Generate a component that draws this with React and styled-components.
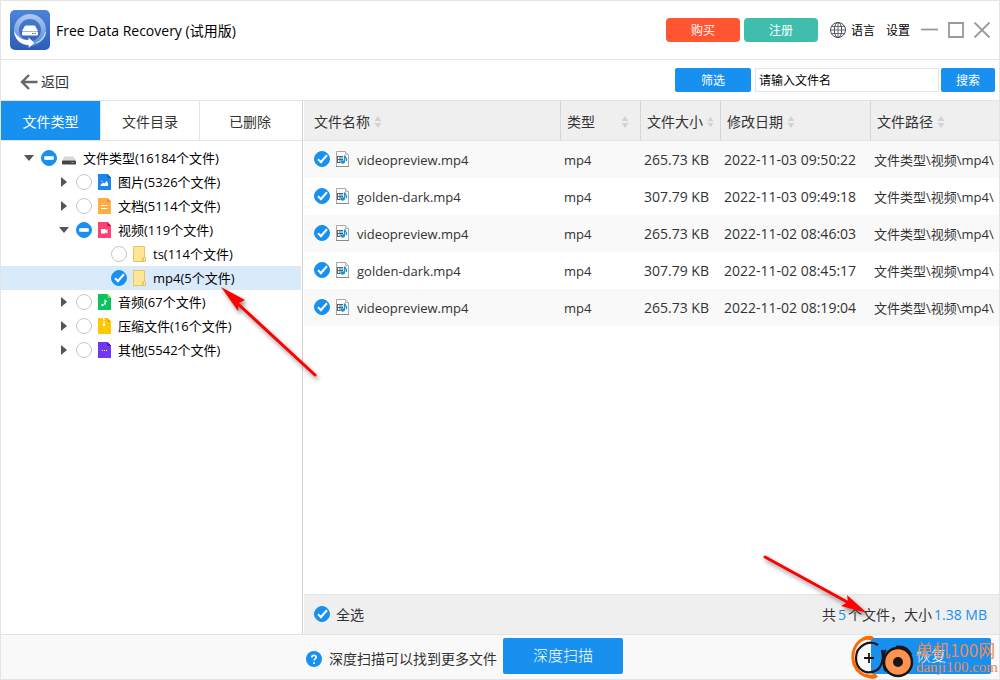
import React from "react";
import styled, { createGlobalStyle, css } from "styled-components";

const BLUE = "#1890f0";
const LINE = "#e4e4e4";

const GlobalStyle = createGlobalStyle`
  *, *::before, *::after { box-sizing: border-box; }
  body { margin: 0; background: #fff; }
  body, button, input {
    font-family: "Open Sans", "Noto Sans", "Noto Sans CJK SC", sans-serif;
  }
  button { cursor: pointer; }
`;

const Window = styled.div`
  position: relative;
  display: flex;
  flex-direction: column;
  min-height: 100vh;
  border: 1px solid ${LINE};
  color: #333;
  font-size: 14px;
  line-height: 20px;
  overflow: hidden;
`;

const TitleBar = styled.header`
  display: flex;
  align-items: center;
  height: 59px;
  padding: 0 8px 0 9px;
  border-bottom: 1px solid ${LINE};
`;

const AppTitle = styled.h1`
  flex: 1;
  margin: 0 0 0 6px;
  padding-top: 2px;
  font-size: 14px;
  font-weight: 400;
  color: #000;
`;

const Button = styled.button`
  display: block;
  width: ${(p) => p.$width}px;
  height: ${(p) => p.$height || 24}px;
  padding: ${(p) => (p.$height ? "0 0 2px" : "2px 0 0")};
  border: 0;
  border-radius: ${(p) => p.$radius || 2}px;
  background: ${(p) => p.$color || BLUE};
  color: #fff;
  font-size: ${(p) => p.$size || 12}px;
  font-weight: ${(p) => (p.$height ? 300 : 400)};
  line-height: 20px;
`;

const TitleButtons = styled.div`
  display: flex;
  gap: 4px;
  margin-right: 12px;
`;

const TextButton = styled.button`
  display: flex;
  align-items: center;
  gap: 5px;
  margin-right: 11px;
  padding: 0;
  border: 0;
  background: none;
  color: #000;
  font-size: 12px;
  line-height: 20px;
  span { padding-top: 2px; }
`;

const WindowControls = styled.div`
  display: flex;
  gap: 8px;
`;

const IconButton = styled.button`
  display: flex;
  padding: 0;
  border: 0;
  background: none;
`;

const Toolbar = styled.div`
  display: flex;
  align-items: center;
  height: 41px;
  padding: 0 4px 0 19px;
  border-bottom: 1px solid ${LINE};
`;

const BackButton = styled.button`
  display: flex;
  align-items: center;
  gap: 3px;
  margin: 3px auto 0 0;
  padding: 0;
  border: 0;
  background: none;
  color: #333;
  font-size: 14px;
  line-height: 20px;
`;

const SearchForm = styled.form`
  display: flex;
  gap: 2px;
  margin-left: 4px;
`;

const SearchInput = styled.input`
  width: 184px;
  height: 24px;
  padding: 0 3px;
  border: 1px solid ${LINE};
  color: #000;
  font-size: 12px;
  &::placeholder { color: #000; opacity: 1; }
`;

const Body = styled.div`
  display: flex;
  flex: 1;
`;

const Sidebar = styled.aside`
  flex: 0 0 302px;
  border-right: 1px solid #d4d4d4;
`;

const Tabs = styled.div`
  display: grid;
  grid-template-columns: 100px 99px 1fr;
  height: 40px;
  border-bottom: 1px solid ${LINE};
`;

const Tab = styled.button`
  padding: 2px 0 0;
  border: 0;
  border-right: 1px solid ${LINE};
  background: ${(p) => (p.$active ? BLUE : "#fff")};
  color: ${(p) => (p.$active ? "#fff" : "#333")};
  font-size: 14px;
  line-height: 20px;
  &:last-child { border-right: 0; padding-right: 2px; }
`;

const Tree = styled.ul`
  margin: 0;
  padding: 5px 1px 0 0;
  list-style: none;
`;

const TreeItem = styled.li`
  display: flex;
  align-items: center;
  height: 24px;
  padding-left: ${(p) => 23 + p.$level * 35}px;
  background: ${(p) => (p.$selected ? "#d9ebfb" : "transparent")};
`;

const Disclosure = styled.button`
  display: flex;
  align-items: center;
  justify-content: center;
  width: 10px;
  height: 16px;
  margin-right: 7px;
  padding: 0;
  border: 0;
  background: none;
  visibility: ${(p) => (p.$hidden ? "hidden" : "visible")};
`;

const TreeLabel = styled.label`
  display: flex;
  align-items: center;
  color: #000;
  font-size: 13px;
  line-height: 20px;
  white-space: nowrap;
  svg { margin: 0 7px 0 5px; }
`;

const filled = css`
  border-color: ${BLUE};
  background: ${BLUE};
`;

const Check = styled.input.attrs({ type: "checkbox" })`
  appearance: none;
  display: grid;
  flex: none;
  place-items: center;
  width: 16px;
  height: 16px;
  margin: 0;
  border: 1px solid #c6c6c6;
  border-radius: 50%;
  background: #fff;
  &::after { content: ""; display: none; }
  &:checked { ${filled} }
  &:checked::after {
    display: block;
    width: 5px;
    height: 10px;
    margin-bottom: 2px;
    border: solid #fff;
    border-width: 0 2px 2px 0;
    transform: rotate(42deg);
  }
  &:indeterminate { ${filled} }
  &:indeterminate::after {
    display: block;
    width: 10px;
    height: 4px;
    border: 1px solid #d9ecfd;
    border-radius: 1px;
    background: #fff;
  }
`;

const Main = styled.main`
  display: flex;
  flex: 1;
  flex-direction: column;
  min-width: 0;
  margin-left: 1px;
`;

const Table = styled.table`
  width: 100%;
  border-collapse: separate;
  border-spacing: 0;
  table-layout: fixed;
`;

const HeadCell = styled.th`
  height: 40px;
  padding: 2px 6px 0 6px;
  border-right: 1px solid #d6d6d6;
  border-bottom: 1px solid ${LINE};
  background: #efefef;
  font-weight: 400;
  text-align: left;
  white-space: nowrap;
  &:first-child { padding-left: 10px; }
  &:last-child { border-right: 0; }
`;

const HeadContent = styled.div`
  display: flex;
  align-items: center;
  justify-content: ${(p) => (p.$spread ? "space-between" : "flex-start")};
  gap: 4px;
  padding-right: ${(p) => (p.$spread ? 5 : 0)}px;
`;

const Row = styled.tr`
  &:nth-child(odd) { background: #f9f9f9; }
`;

const Cell = styled.td`
  height: 37px;
  padding: 1px 0 0 3px;
  overflow: hidden;
  white-space: nowrap;
  font-size: ${(p) => p.$size || 14}px;
  &:first-child { padding: 0 0 1px 10px; }
`;

const FileLabel = styled.label`
  display: flex;
  align-items: center;
  svg { margin: 0 8px 0 6px; }
  span { padding-top: 2px; }
`;

const Summary = styled.div`
  display: flex;
  align-items: center;
  justify-content: space-between;
  height: 40px;
  margin-top: auto;
  padding: 0 12px 0 10px;
  border-top: 1px solid ${LINE};
  background: #efefef;
`;

const SelectAll = styled.label`
  display: flex;
  align-items: center;
  gap: 6px;
  padding-bottom: 2px;
  span { padding-top: 2px; }
`;

const Highlight = styled.span`
  margin: 0 2px;
  color: ${BLUE};
  &:last-child { margin-right: 0; }
`;

const Footer = styled.footer`
  display: flex;
  align-items: center;
  height: 45px;
  padding: 0 8px 2px 305px;
  border-top: 1px solid ${LINE};
  background: #f9f9f9;
`;

const Hint = styled.p`
  display: flex;
  align-items: center;
  gap: 7px;
  margin: 6px 6px 0 0;
`;

const RestoreSlot = styled.div`
  margin-left: auto;
`;

const TreeArrow = styled.svg`
  position: absolute;
  top: 275px;
  left: 208px;
  pointer-events: none;
`;

const SummaryArrow = styled.svg`
  position: absolute;
  right: 119px;
  bottom: 53px;
  pointer-events: none;
`;

const Watermark = styled.div`
  position: absolute;
  right: 1px;
  bottom: 0;
  display: flex;
  align-items: center;
  gap: 2px;
  color: #f08a50;
  pointer-events: none;
`;

const WatermarkText = styled.div`
  font-size: 17px;
  line-height: 19px;
  white-space: nowrap;
  font-family: "Noto Sans CJK SC", sans-serif;
  small {
    display: block;
    font-family: "Liberation Serif", serif;
    font-size: 15px;
    line-height: 17px;
  }
`;

const AppLogo = () => (
  <svg width="40" height="40" viewBox="0 0 40 40" aria-hidden="true">
    <defs>
      <linearGradient id="logoBg" x1="0" y1="0" x2="0" y2="1">
        <stop offset="0" stopColor="#4d84d8" />
        <stop offset="1" stopColor="#2b5eb4" />
      </linearGradient>
      <linearGradient id="logoRing" x1="0" y1="0" x2="0" y2="1">
        <stop offset="0" stopColor="#a9c5f0" />
        <stop offset="1" stopColor="#5c8ddb" />
      </linearGradient>
    </defs>
    <rect width="40" height="40" rx="5" fill="url(#logoBg)" />
    <circle cx="20" cy="20" r="13.500" fill="none" stroke="url(#logoRing)" strokeWidth="5" />
    <path d="M4 21c1 9 7 14 15 14l-.5 3 6-5-6-5.500v2.500C12 30 7 27 4 21z" fill="#fff" />
    <path d="M26 33c5-2 9-6 9.500-11" fill="none" stroke="#c9dcf7" strokeWidth="1.200" />
    <path d="M16 15.500h8q1 0 1.500 1l2.500 4.500H12l2.500-4.500q.5-1 1.500-1z" fill="#fff" />
    <rect x="12" y="21.500" width="16" height="4" rx="1" fill="#fff" />
    <path d="M22 23.500h1.500M24.500 23.500H26" stroke="#4278cb" strokeWidth="1" />
  </svg>
);

const BackIcon = () => (
  <svg width="18" height="16" viewBox="0 0 18 16" fill="none" stroke="#666" strokeWidth="2.400" aria-hidden="true">
    <path d="M17.500 8H2M9 1 2 8l7 7" />
  </svg>
);

const GlobeIcon = () => (
  <svg width="16" height="16" viewBox="0 0 16 16" fill="none" stroke="#444a55" strokeWidth="1" aria-hidden="true">
    <circle cx="8" cy="8" r="7.500" />
    <ellipse cx="8" cy="8" rx="3.700" ry="7.500" />
    <path d="M8 .5v15M2 4.500h12M.5 8h15M2 11.500h12" strokeWidth=".8" />
  </svg>
);

const controlPaths = {
  最小化: "M0 7.500h17",
  最大化: "M2 1h14v14H2z",
  关闭: "M1.500 .5l15 15M16.500 .5l-15 15",
};

const ControlIcon = ({ name }) => (
  <svg width="18" height="16" viewBox="0 0 18 16" fill="none" stroke="#999" strokeWidth="1.800" aria-hidden="true">
    <path d={controlPaths[name]} />
  </svg>
);

const Caret = ({ open }) => (
  <svg width="10" height="12" viewBox="0 0 10 12" fill="#555" aria-hidden="true">
    <path d={open ? "M0 3h10L5 9z" : "M2 1v10l6-5z"} />
  </svg>
);

const SortIcon = () => (
  <svg width="8" height="12" viewBox="0 0 8 12" fill="#d3d3d3" aria-hidden="true">
    <path d="M4 0l3.500 5h-7zM4 12l3.500-5h-7z" />
  </svg>
);

const docs = {
  image: { color: "#1b87ee", fold: "#0a5cb8", mark: <path d="M3.500 12v-1l2.500-2.500 1.500 1L9.500 7l1.500 2v3zM4.500 6.500h1v1h-1z" fill="#fff" /> },
  doc: { color: "#ffae45", fold: "#f08a1d", mark: <path d="M4 7.500h6.500M4 10.500h6.500" stroke="#fff" /> },
  video: { color: "#ff4070", fold: "#d0063e", mark: <path d="M4 7h4.500v1.200L10.500 7v4.500l-2-1.200v1.200H4z" fill="#fff" /> },
  audio: {
    color: "#0cc160",
    fold: "#7fe04a",
    mark: (
      <g fill="#fff">
        <circle cx="5.500" cy="11" r="1.200" />
        <circle cx="8" cy="9.800" r="1" />
        <path d="M7.500 5.500h1v1.200h1.500v1H8.500V10h-1z" />
      </g>
    ),
  },
  zip: { color: "#ffc800", fold: "#f0a000", mark: <path d="M6 0h1v1h1v1H7v1h1v1H7v1h1v3H6V5h1V4H6V3h1V2H6z" fill="#fff" /> },
  other: { color: "#7038f2", fold: "#3f10b0", mark: <path d="M5 8h1v1H5zM7 8h1v1H7zM9 8h1v1H9z" fill="#fff" /> },
};

const TreeIcon = ({ kind }) => {
  if (kind === "drive") {
    return (
      <svg width="14" height="16" viewBox="0 0 14 16" aria-hidden="true">
        <path d="M2.500 6.500h9L14 10.500H0z" fill="#d8d8d8" />
        <rect y="10.500" width="14" height="4" rx="1" fill="#444" />
        <path d="M9.500 12.500h2" stroke="#42d65a" />
      </svg>
    );
  }
  if (kind === "folder") {
    return (
      <svg width="14" height="16" viewBox="0 0 14 16" aria-hidden="true">
        <path d="M1.500 .5h11v10l1 1v4h-12z" fill="#ffe596" stroke="#e8c55e" />
        <path d="M11 15.500v-3l1.500-2" fill="none" stroke="#d9ae3c" />
      </svg>
    );
  }
  const { color, fold, mark } = docs[kind];
  return (
    <svg width="14" height="16" viewBox="0 0 14 16" aria-hidden="true">
      <path d="M1 0h9.500L14 3.500V16H1z" fill={color} />
      <path d="M10.500 0L14 4h-3.500z" fill={fold} />
      {mark}
    </svg>
  );
};

const MediaFileIcon = () => (
  <svg width="13" height="16" viewBox="0 0 13 16" aria-hidden="true">
    <path d="M.5 .5h9l3 3v12H.5z" fill="#fdfdfd" stroke="#a8a8a8" />
    <path d="M9.500 .5v3h3" fill="#e8e8e8" stroke="#b5b5b5" />
    <path d="M0 15.500h13" stroke="#888" />
    <path d="M1.500 5v7M4 5v7" stroke="#55616b" />
    <path d="M1 5.500h6M1 8.500h6M1 11.500h3" stroke="#55616b" />
    <path d="M5 6h2v2H5zM5 9h1v1H5z" fill="#8fc6e6" />
    <ellipse cx="6.800" cy="11" rx="2.200" ry="1.800" fill="#1593d6" />
    <path d="M8.500 11V4.500c.4 1.600 3 2.300 1.800 5.500" fill="none" stroke="#1593d6" strokeWidth="1.300" />
  </svg>
);

const HelpIcon = () => (
  <svg width="16" height="16" viewBox="0 0 16 16" aria-hidden="true">
    <circle cx="8" cy="8" r="8" fill={BLUE} />
    <path d="M5.800 6.500C5.800 3.500 10.300 3.700 10.200 6.300 10.100 7.800 8 7.900 8 9.600" fill="none" stroke="#fff" strokeWidth="1.700" />
    <circle cx="8" cy="12" r="1" fill="#fff" />
  </svg>
);

const Shadowed = styled.g`
  filter: drop-shadow(2px 3px 2px rgba(0, 0, 0, 0.45));
`;

const WatermarkLogo = () => (
  <svg width="63" height="43" viewBox="0 0 63 43" fill="none" aria-hidden="true">
    <path d="M21 3C9-1 1 12 2 23c1 10 10 21 23 16" stroke="#ff6a00" strokeWidth="3" />
    <path d="M12 3.500C15 .5 19 .5 22 2.500M15 39c4 3 8 3 11 .5" stroke="#ff6a00" strokeWidth="3" />
    <path d="M27 9C18 3 5 10 5 22s11 18 21 12c8-5 4-16 9-20" stroke="#1c1416" strokeWidth="2.200" />
    <circle cx="47" cy="26" r="14" fill="#ff9450" stroke="#1c1416" strokeWidth="2.500" />
    <path d="M31 14c2 5 0 16 4 21M45 11c6-1 12 1 15 8" stroke="#1c1416" strokeWidth="2.500" />
    <circle cx="47" cy="26" r="5" fill="#1c1416" />
    <path d="M13 22h10M18 17v10" stroke="#1c1416" strokeWidth="1.800" />
  </svg>
);

const treeItems = [
  { level: 0, open: true, state: "partial", icon: "drive", text: "文件类型(16184个文件)" },
  { level: 1, icon: "image", text: "图片(5326个文件)" },
  { level: 1, icon: "doc", text: "文档(5114个文件)" },
  { level: 1, open: true, state: "partial", icon: "video", text: "视频(119个文件)" },
  { level: 2, leaf: true, icon: "folder", text: "ts(114个文件)" },
  { level: 2, leaf: true, state: "checked", selected: true, icon: "folder", text: "mp4(5个文件)" },
  { level: 1, icon: "audio", text: "音频(67个文件)" },
  { level: 1, icon: "zip", text: "压缩文件(16个文件)" },
  { level: 1, icon: "other", text: "其他(5542个文件)" },
];

const files = [
  ["videopreview.mp4", "265.73 KB", "2022-11-03 09:50:22"],
  ["golden-dark.mp4", "307.79 KB", "2022-11-03 09:49:18"],
  ["videopreview.mp4", "265.73 KB", "2022-11-02 08:46:03"],
  ["golden-dark.mp4", "307.79 KB", "2022-11-02 08:45:17"],
  ["videopreview.mp4", "265.73 KB", "2022-11-02 08:19:04"],
];

const setPartial = (el) => {
  if (el) el.indeterminate = true;
};

export default function App() {
  return (
    <Window>
      <GlobalStyle />
      <TitleBar>
        <AppLogo />
        <AppTitle>Free Data Recovery (试用版)</AppTitle>
        <TitleButtons>
          <Button $width={74} $radius={4} $color="#ff5530">购买</Button>
          <Button $width={74} $radius={4} $color="#3fbdad">注册</Button>
        </TitleButtons>
        <TextButton><GlobeIcon /><span>语言</span></TextButton>
        <TextButton><span>设置</span></TextButton>
        <WindowControls>
          {Object.keys(controlPaths).map((name) => (
            <IconButton key={name} aria-label={name}><ControlIcon name={name} /></IconButton>
          ))}
        </WindowControls>
      </TitleBar>

      <Toolbar>
        <BackButton><BackIcon />返回</BackButton>
        <Button $width={76}>筛选</Button>
        <SearchForm onSubmit={(e) => e.preventDefault()}>
          <SearchInput aria-label="文件名" placeholder="请输入文件名" />
          <Button $width={54}>搜索</Button>
        </SearchForm>
      </Toolbar>

      <Body>
        <Sidebar>
          <Tabs>
            <Tab $active>文件类型</Tab>
            <Tab>文件目录</Tab>
            <Tab>已删除</Tab>
          </Tabs>
          <Tree>
            {treeItems.map((item) => (
              <TreeItem key={item.text} $level={item.level} $selected={item.selected}>
                <Disclosure $hidden={item.leaf} aria-label="展开"><Caret open={item.open} /></Disclosure>
                <TreeLabel>
                  <Check
                    defaultChecked={item.state === "checked"}
                    ref={item.state === "partial" ? setPartial : undefined}
                  />
                  <TreeIcon kind={item.icon} />
                  {item.text}
                </TreeLabel>
              </TreeItem>
            ))}
          </Tree>
        </Sidebar>

        <Main>
          <Table>
            <colgroup>
              <col style={{ width: 257 }} />
              <col style={{ width: 80 }} />
              <col style={{ width: 80 }} />
              <col style={{ width: 150 }} />
              <col />
            </colgroup>
            <thead>
              <tr>
                {["文件名称", "类型", "文件大小", "修改日期", "文件路径"].map((name) => (
                  <HeadCell key={name}>
                    <HeadContent $spread={name === "类型"}>{name}<SortIcon /></HeadContent>
                  </HeadCell>
                ))}
              </tr>
            </thead>
            <tbody>
              {files.map(([name, size, date]) => (
                <Row key={date}>
                  <Cell $size={13}>
                    <FileLabel><Check defaultChecked /><MediaFileIcon /><span>{name}</span></FileLabel>
                  </Cell>
                  <Cell $size={13}>mp4</Cell>
                  <Cell>{size}</Cell>
                  <Cell>{date}</Cell>
                  <Cell $size={13}>文件类型\视频\mp4\</Cell>
                </Row>
              ))}
            </tbody>
          </Table>
          <Summary>
            <SelectAll><Check defaultChecked /><span>全选</span></SelectAll>
            <span>共<Highlight>5</Highlight>个文件，大小<Highlight>1.38 MB</Highlight></span>
          </Summary>
        </Main>
      </Body>

      <Footer>
        <Hint><HelpIcon />深度扫描可以找到更多文件</Hint>
        <Button $width={120} $height={36} $size={15}>深度扫描</Button>
        <RestoreSlot>
          <Button $width={120} $height={36} $size={15}>恢复</Button>
        </RestoreSlot>
      </Footer>

      <TreeArrow width="120" height="112" viewBox="210 277 120 112" aria-hidden="true">
        <Shadowed>
          <path d="M238 304L316 376" stroke="#f00" strokeWidth="3" strokeLinecap="round" />
          <path d="M222 288l24 13-6 3-1 8z" fill="#f00" />
        </Shadowed>
      </TreeArrow>
      <SummaryArrow width="130" height="80" viewBox="750 546 130 80" aria-hidden="true">
        <Shadowed>
          <path d="M765 557l84 46" stroke="#f00" strokeWidth="3" strokeLinecap="round" />
          <path d="M867 613l-20-18 1 7-7 4z" fill="#f00" />
        </Shadowed>
      </SummaryArrow>
      <Watermark>
        <WatermarkLogo />
        <WatermarkText>单机100网<small>danji100.com</small></WatermarkText>
      </Watermark>
    </Window>
  );
}
